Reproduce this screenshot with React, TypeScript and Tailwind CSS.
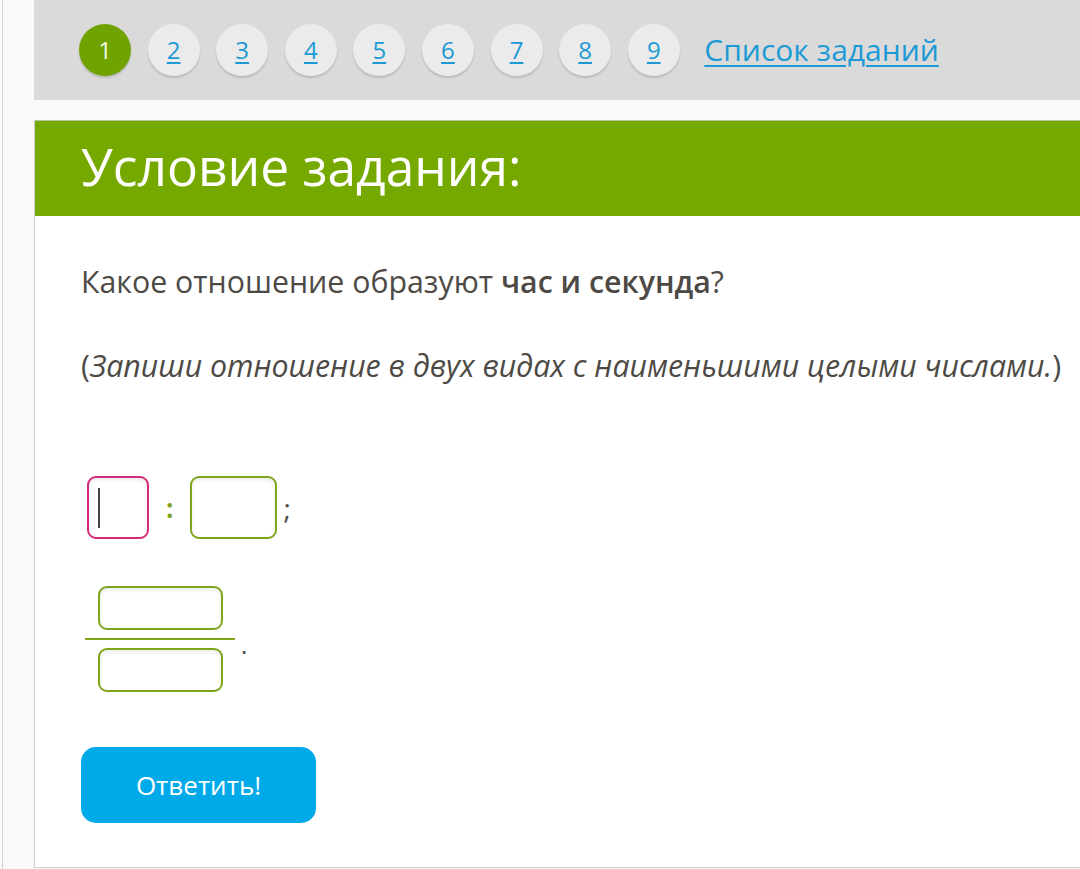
export default function App() {
  const pages = [1, 2, 3, 4, 5, 6, 7, 8, 9];

  return (
    <div className="w-[1080px] h-[869px] overflow-hidden bg-[#f9f9f9] flex font-['Open_Sans',sans-serif]">
      <div className="w-[34px] shrink-0 flex">
        <div className="ml-[2px] w-[1px] bg-[#d4d4d4]" />
      </div>

      <div className="flex flex-col w-[1200px] shrink-0">
        <nav className="h-[100px] bg-[#dadada] flex items-center pl-[45px] gap-[16.6px] pb-[1px]">
          {pages.map((n) =>
            n === 1 ? (
              <div
                key={n}
                className="w-[52px] h-[52px] rounded-full bg-[#71a300] shadow-[0_2px_2px_rgba(0,0,0,0.15)] flex items-center justify-center text-[24px] text-[#f4f8e8]"
              >
                {n}
              </div>
            ) : (
              <a
                key={n}
                href="#"
                className="w-[52px] h-[52px] rounded-full bg-[#ebebeb] shadow-[0_2px_2px_rgba(0,0,0,0.15)] flex items-center justify-center text-[24px] text-[#1c9ad6] underline underline-offset-[3px]"
              >
                {n}
              </a>
            )
          )}
          <a href="#" className="ml-[8px] text-[30px] text-[#1c9ad6] underline underline-offset-[4px] decoration-[2px]">
            Список заданий
          </a>
        </nav>

        <div className="h-[20px]" />

        <section className="flex-1 bg-white border-l border-t border-b border-[#cfcfcf] border-t-[#b9c3a6] mb-[1px]">
          <div className="h-[95px] bg-[#76a900] flex items-center pl-[46px]">
            <h1 className="text-[51.5px] leading-none text-white pb-[4px]">Условие задания:</h1>
          </div>

          <div className="pl-[46px] text-[#4d4a45]">
            <p className="text-[30.3px] mt-[46px] leading-[40px]">
              Какое отношение образуют <b className="font-semibold">час и секунда</b>?
            </p>
            <p className="text-[30.3px] mt-[44px] leading-[40px]">
              (<i>Запиши отношение в двух видах с наименьшими целыми числами.</i>)
            </p>

            <div className="mt-[90px] flex items-center ml-[6px]">
              <div className="w-[62px] h-[63px] rounded-[9px] border-2 border-[#d6287a] bg-white shadow-[inset_0_2px_4px_rgba(0,0,0,0.08)] flex items-center pl-[9px]">
                <div className="w-[2px] h-[40px] bg-[#444]" />
              </div>
              <span className="mx-[17px] text-[26px] text-[#7ea51c] font-bold leading-none">:</span>
              <div className="w-[87px] h-[63px] rounded-[9px] border-2 border-[#7ea51c] bg-white shadow-[inset_0_2px_4px_rgba(0,0,0,0.08)]" />
              <span className="ml-[6px] text-[28px] leading-none">;</span>
            </div>

            <div className="mt-[47px] flex items-center ml-[4px]">
              <div className="flex flex-col items-center w-[150px]">
                <div className="w-[125px] h-[44px] rounded-[9px] border-2 border-[#7ea51c] bg-white shadow-[inset_0_2px_4px_rgba(0,0,0,0.08)]" />
                <div className="w-[150px] h-[2px] bg-[#7ea51c] my-[8px]" />
                <div className="w-[125px] h-[44px] rounded-[9px] border-2 border-[#7ea51c] bg-white shadow-[inset_0_2px_4px_rgba(0,0,0,0.08)]" />
              </div>
              <span className="ml-[6px] mt-[12px] text-[24px] leading-none">.</span>
            </div>

            <button className="mt-[55px] w-[235px] h-[76px] rounded-[15px] bg-[#00a9e8] text-white text-[26px]">
              Ответить!
            </button>
          </div>
        </section>
      </div>
    </div>
  );
}
